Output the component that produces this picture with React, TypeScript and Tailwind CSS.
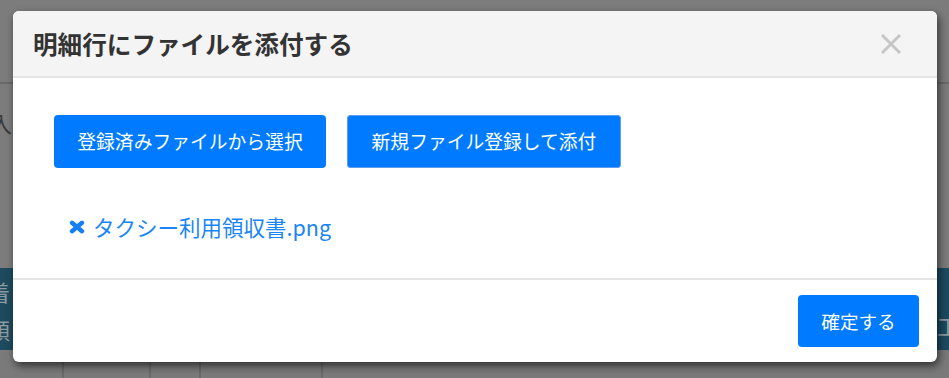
const jp = { fontFamily: '"Noto Sans CJK JP", "Noto Sans", sans-serif' };

function CloseIcon() {
  return (
    <svg width="22" height="22" viewBox="0 0 22 22" fill="none" stroke="#c6c6c6" strokeWidth="3">
      <path d="M2 2 L20 20 M20 2 L2 20" />
    </svg>
  );
}

function RemoveIcon() {
  return (
    <svg width="16" height="14" viewBox="0 0 16 14" fill="none" stroke="#1580f5" strokeWidth="4.4" strokeLinecap="round">
      <path d="M3 2.8 L13 11.2 M13 2.8 L3 11.2" />
    </svg>
  );
}

export default function App() {
  return (
    <div className="relative w-[949px] h-[378px] overflow-hidden bg-[#7c7c7c]" style={jp}>
      {/* dimmed page behind the modal */}
      <div className="flex flex-col">
        <div className="h-[82px]" />
        <div className="h-[2px] bg-[#6a6a6a]" />
        <div className="h-[184px] pt-[22px] text-[22px] text-[#3a3a3a] -ml-[10px]">入</div>
        <div className="h-[82px] bg-[#1d4a5f] flex justify-between text-[#8d9aa0] text-[22px] leading-[38px] pt-[4px]">
          <div className="flex flex-col -ml-[12px]">
            <span>着</span>
            <span>額</span>
          </div>
          <div className="pt-[34px] -mr-[10px]">工</div>
        </div>
        <div className="flex h-[30px] bg-[#7a7a7a]">
          <div className="w-[64px] border-r-2 border-[#6a6a6a]" />
          <div className="w-[87px] border-r-2 border-[#6a6a6a]" />
          <div className="w-[50px] border-r-2 border-[#6a6a6a]" />
          <div className="w-[122px] border-r-2 border-[#6a6a6a]" />
        </div>
      </div>

      {/* modal */}
      <div className="absolute left-[13px] top-[11px] w-[924px] rounded-[6px] bg-white overflow-hidden shadow-[2px_4px_8px_rgba(0,0,0,0.6)]">
        <div className="h-[67px] flex items-center justify-between bg-[#f4f4f4] border-b-2 border-[#e5e5e5] pl-[20px] pr-[35px]">
          <h2 className="text-[24.6px] font-bold text-[#333]">明細行にファイルを添付する</h2>
          <CloseIcon />
        </div>

        <div className="h-[200px] pt-[37px] pl-[41px]">
          <div className="flex gap-[21px]">
            <button className="h-[53px] w-[272px] rounded-[4px] bg-[#007bff] text-white text-[18.8px]">
              登録済みファイルから選択
            </button>
            <button className="h-[53px] w-[274px] rounded-[3px] bg-[#007bff] border border-[#5e9df0] text-white text-[18.8px]">
              新規ファイル登録して添付
            </button>
          </div>
          <div className="mt-[43px] ml-[15px] flex items-center gap-[8px] text-[21.5px] leading-[32px] text-[#1a85f5]">
            <RemoveIcon />
            <span>タクシー利用領収書.png</span>
          </div>
        </div>

        <div className="h-[84px] border-t-2 border-[#e5e5e5] flex items-center justify-end pr-[18px]">
          <button className="h-[52px] w-[121px] rounded-[4px] bg-[#007bff] text-white text-[18.6px]">確定する</button>
        </div>
      </div>
    </div>
  );
}
